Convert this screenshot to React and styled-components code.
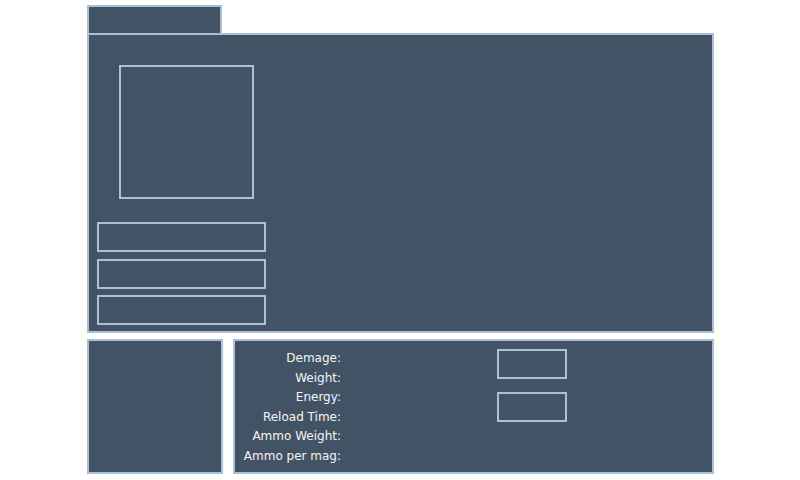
import React from "react";
import styled, { createGlobalStyle } from "styled-components";

const BG = "#435366";
const LINE = "#aac0d6";

const Global = createGlobalStyle`
  html, body { margin: 0; padding: 0; background: #ffffff; }
  body { font-family: "DejaVu Sans", Verdana, sans-serif; }
`;

const Page = styled.div`
  width: 627px;
  margin-left: 87px;
  padding-top: 5px;
  display: flex;
  flex-direction: column;
`;

const Tab = styled.div`
  width: 131px;
  height: 26px;
  background: ${BG};
  border: 2px solid ${LINE};
  border-bottom: none;
`;

const Panel = styled.div`
  box-sizing: border-box;
  background: ${BG};
  border: 2px solid ${LINE};
  height: ${(p) => p.$h}px;
  width: ${(p) => (p.$w ? `${p.$w}px` : "auto")};
  flex: ${(p) => (p.$grow ? "1" : "none")};
`;

const MainInner = styled.div`
  display: flex;
  flex-direction: column;
  padding: 30px 0 0 8px;
`;

const Portrait = styled.div`
  box-sizing: border-box;
  width: 135px;
  height: 134px;
  margin-left: 22px;
  border: 2px solid ${LINE};
`;

const SlotList = styled.div`
  display: flex;
  flex-direction: column;
  gap: 6.5px;
  margin-top: 23px;
`;

const Slot = styled.div`
  box-sizing: border-box;
  width: 169px;
  height: 30px;
  border: 2px solid ${LINE};
`;

const BottomRow = styled.div`
  display: flex;
  gap: 10px;
  margin-top: 6px;
`;

const StatsInner = styled.div`
  display: flex;
  padding-top: 8px;
`;

const Labels = styled.div`
  width: 106px;
  display: flex;
  flex-direction: column;
  align-items: flex-end;
  color: #f2f5f8;
  font-size: 12px;
  line-height: 19.6px;
`;

const Values = styled.div`
  display: flex;
  flex-direction: column;
  gap: 13px;
  margin-left: 156px;
`;

const ValueBox = styled.div`
  box-sizing: border-box;
  width: 70px;
  height: 30px;
  border: 2px solid ${LINE};
`;

const stats = ["Demage:", "Weight:", "Energy:", "Reload Time:", "Ammo Weight:", "Ammo per mag:"];

export default function App() {
  return (
    <>
      <Global />
      <Page>
        <Tab />
        <Panel $h={300}>
          <MainInner>
            <Portrait />
            <SlotList>
              <Slot />
              <Slot />
              <Slot />
            </SlotList>
          </MainInner>
        </Panel>
        <BottomRow>
          <Panel $h={135} $w={136} />
          <Panel $h={135} $grow>
            <StatsInner>
              <Labels>
                {stats.map((s) => (
                  <span key={s}>{s}</span>
                ))}
              </Labels>
              <Values>
                <ValueBox />
                <ValueBox />
              </Values>
            </StatsInner>
          </Panel>
        </BottomRow>
      </Page>
    </>
  );
}
